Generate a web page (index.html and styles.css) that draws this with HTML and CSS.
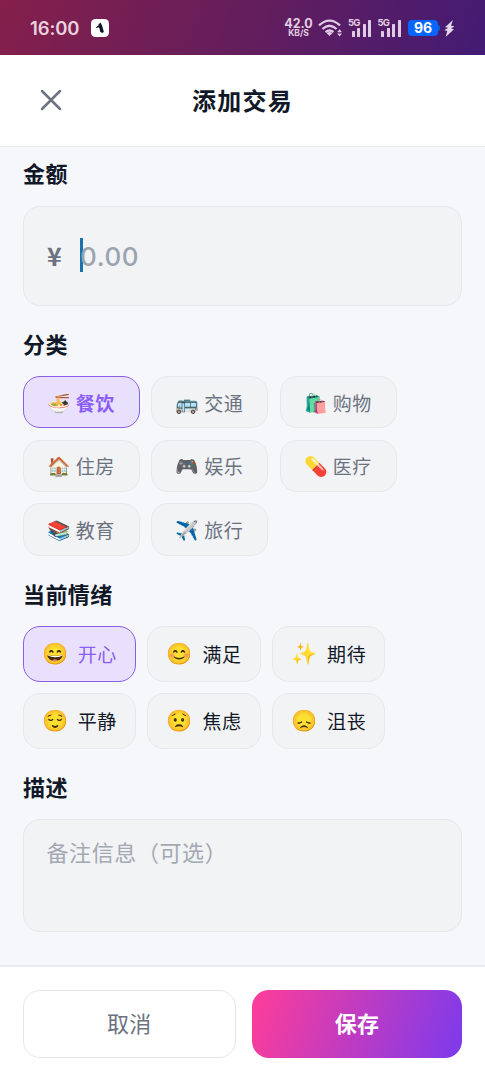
FILE: index.html
```html
<!DOCTYPE html>
<html lang="zh-CN">
<head>
<meta charset="utf-8">
<title>添加交易</title>
<link rel="stylesheet" href="styles.css">
</head>
<body>
<div class="screen">
  <div class="status">
    <span class="clock">16:00</span>
    <svg class="app-badge" viewBox="0 0 18 18"><rect width="18" height="18" rx="4.5" fill="#fff"/><path d="M7.5 5l2.3-1.3 1.3 3 1.8 6.2-1.8 1-2-1.2-.6-3.4-1-1-2.9 1.2 1.7-2.4 1.4-.6z" fill="#10172c"/></svg>
    <span class="speed"><span class="rate">42.0</span><span class="unit">KB/S</span></span>
    <svg class="wifi" viewBox="0 0 25 18" fill="none" stroke="#dfcbe3" stroke-width="2.3"><path d="M1 6.4Q11.5-3.2 22 6.4M4.4 10Q11.5 3.4 18.6 10M7.6 13.2Q11.5 9.8 15.4 13.2"/><path d="M11.5 17l-3-3q3-2 6 0zM21.6 10.3l2.4 3h-4.8zM21.6 17.6l2.4-3h-4.8z" fill="#dfcbe3" stroke="none"/></svg>
    <span class="signal"><span class="net">5G</span><span class="bars"><i></i><i></i><i></i><i></i></span></span>
    <span class="signal second"><span class="net">5G</span><span class="bars"><i></i><i></i><i></i><i></i></span></span>
    <span class="battery">96</span>
    <svg class="bolt" viewBox="0 0 11 17"><path d="M9 0L1 7.3l3.2.4L.3 10.2l3 .8L1.6 17 10 9.2 7 8.6l3.6-2.4-3.6-.5z" fill="#e2d7ed"/></svg>
  </div>
  <header class="header">
    <svg class="close" viewBox="0 0 22 22" fill="none" stroke="#6b7280" stroke-width="2.5" stroke-linecap="round"><path d="M2 2l18 18M20 2L2 20"/></svg>
    <h1 class="title">添加交易</h1>
  </header>
  <main class="form">
    <h2 class="label">金额</h2>
    <div class="amount"><span class="yen">¥</span><span class="caret"></span><span class="zero">0.00</span></div>
    <h2 class="label">分类</h2>
    <div class="chips categories">
      <div class="chip active"><span class="emoji">🍜</span><span class="name">餐饮</span></div>
      <div class="chip"><span class="emoji">🚌</span><span class="name">交通</span></div>
      <div class="chip"><span class="emoji">🛍️</span><span class="name">购物</span></div>
      <div class="chip"><span class="emoji">🏠</span><span class="name">住房</span></div>
      <div class="chip"><span class="emoji">🎮</span><span class="name">娱乐</span></div>
      <div class="chip"><span class="emoji">💊</span><span class="name">医疗</span></div>
      <div class="chip"><span class="emoji">📚</span><span class="name">教育</span></div>
      <div class="chip"><span class="emoji">✈️</span><span class="name">旅行</span></div>
    </div>
    <h2 class="label">当前情绪</h2>
    <div class="chips moods">
      <div class="chip active"><span class="emoji">😄</span><span class="name">开心</span></div>
      <div class="chip"><span class="emoji">😊</span><span class="name">满足</span></div>
      <div class="chip"><span class="emoji">✨</span><span class="name">期待</span></div>
      <div class="chip"><span class="emoji">😌</span><span class="name">平静</span></div>
      <div class="chip"><span class="emoji">😟</span><span class="name">焦虑</span></div>
      <div class="chip"><span class="emoji">😞</span><span class="name">沮丧</span></div>
    </div>
    <h2 class="label">描述</h2>
    <div class="note">备注信息（可选）</div>
  </main>
  <footer class="footer">
    <div class="button cancel">取消</div>
    <div class="button save">保存</div>
  </footer>
</div>
</body>
</html>
```
FILE: styles.css
```css
* { box-sizing: border-box; }
body { margin: 0; font-family: "Noto Sans CJK SC", "Noto Sans", sans-serif; color: #111827; }
.screen { width: 485px; height: 1080px; display: flex; flex-direction: column; overflow: hidden; background: #f5f7fb; }
.status { height: 54.5px; flex: none; display: flex; align-items: center; padding: 2px 0 0 30px; background: linear-gradient(110deg, #851f4b 0%, #641e5c 50%, #431b74 100%); color: #e3cfe2; font-family: Inter, sans-serif; }
.clock { width: 61px; font-size: 18.5px; font-weight: 600; letter-spacing: -0.1px; color: #ead1df; }
.app-badge { width: 18px; height: 18px; }
.speed { width: 29px; margin-left: 175px; display: flex; flex-direction: column; align-items: center; font-weight: 700; }
.rate { font-size: 12.5px; line-height: 10px; }
.unit { font-size: 8.5px; line-height: 9px; }
.wifi { width: 25px; height: 18px; margin-left: 5px; }
.signal { width: 23px; height: 18px; margin-left: 5px; position: relative; display: flex; align-items: flex-end; justify-content: flex-end; }
.signal.second { margin-left: 6.5px; }
.net { position: absolute; left: 0; top: 0; font-size: 9.5px; line-height: 8px; font-weight: 700; letter-spacing: -0.8px; }
.bars { display: flex; align-items: flex-end; gap: 2.4px; }
.bars i { width: 3px; height: 6px; background: #dfcbe3; border-radius: 0.5px; }
.bars i:nth-child(2) { height: 9px; }
.bars i:nth-child(3) { height: 13px; }
.bars i:nth-child(4) { height: 17px; }
.battery { width: 30px; height: 16px; margin-left: 7.5px; border-radius: 4px; background: #0866ff; color: #fff; text-align: center; font-size: 14px; line-height: 16.5px; font-weight: 700; position: relative; }
.battery::after { content: ""; position: absolute; right: -2px; top: 5px; width: 2px; height: 6px; border-radius: 0 2px 2px 0; background: #075ed9; }
.bolt { width: 11px; height: 17px; margin-left: 6px; }
.header { height: 92px; flex: none; display: flex; align-items: center; justify-content: center; background: #fff; border-bottom: 1.5px solid #e7e9ed; position: relative; }
.close { position: absolute; left: 40px; top: 34.5px; width: 22px; height: 22px; }
.title { margin: 0; font-size: 24px; line-height: 34px; font-weight: 700; letter-spacing: 1.2px; }
.form { flex: 1; padding: 9.5px 23px 0; }
.label { margin: 21px 0 17.5px; height: 32px; font-size: 22px; line-height: 32px; font-weight: 700; letter-spacing: 0.4px; }
.label:first-child { margin-top: 0; }
.amount { height: 100px; border: 1.5px solid #e5e7eb; border-radius: 17px; background: #f2f3f5; display: flex; align-items: center; padding-left: 23px; color: #9ca3af; }
.yen { width: 33px; margin-top: -1px; color: #6b7280; font-size: 25px; font-weight: 700; }
.caret { width: 3px; height: 34px; background: #1873ad; margin-right: -3px; margin-top: -2px; }
.zero { margin-top: 1px; font-family: Inter, sans-serif; font-size: 26px; font-weight: 500; letter-spacing: 0.6px; }
.chips { display: grid; gap: 11.5px; }
.categories { grid-template-columns: repeat(3, 117px); grid-auto-rows: 52.2px; margin-left: -0.5px; }
.moods { grid-template-columns: repeat(3, 113.2px); grid-auto-rows: 55.6px; margin-left: -0.3px; }
.chip { display: flex; align-items: center; justify-content: center; border: 1.5px solid #e6e8eb; border-radius: 17px; background: #f2f3f5; white-space: nowrap; font-size: 19px; letter-spacing: 0.6px; }
.emoji { font-family: "Noto Color Emoji", sans-serif; letter-spacing: 0; flex: none; display: flex; justify-content: center; }
.categories .chip { color: #6b7280; gap: 4.5px; }
.categories .emoji { width: 24px; font-size: 19px; margin-top: 2px; }
.moods .chip { gap: 9px; padding-bottom: 1px; }
.moods .emoji { width: 27px; font-size: 21px; margin-top: 2px; }
.chip.active { background: #e8e0fc; border-color: #8b5fe5; color: #8b5cf6; }
.categories .active { font-weight: 700; }
.note { height: 113px; border: 1.5px solid #e5e7eb; border-radius: 17px; background: #f2f3f5; padding: 15px 22.5px; font-size: 22px; line-height: 32px; letter-spacing: 0.6px; color: #a4a8b2; }
.footer { height: 115px; flex: none; background: #fff; border-top: 2px solid #e9ebf0; padding: 22.5px 23px 0; display: flex; gap: 16.5px; }
.button { height: 68px; padding-bottom: 3px; border-radius: 17px; display: flex; align-items: center; justify-content: center; font-size: 22px; letter-spacing: 0.4px; }
.cancel { width: 213px; border: 1.5px solid #e6e7ea; color: #6b7280; font-weight: 400; }
.save { width: 210px; color: #fff; font-weight: 700; background: linear-gradient(108deg, #ff3d98 0%, #7c3aed 100%); }
```
